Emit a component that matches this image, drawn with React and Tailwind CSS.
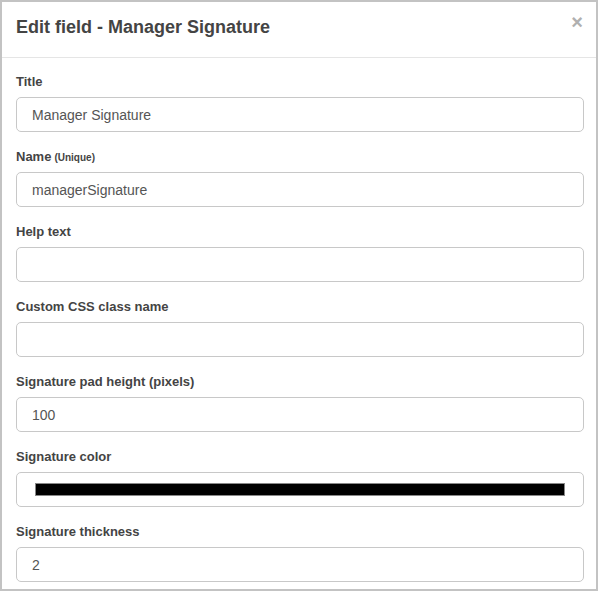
import React from 'react';

const fields = [
    { label: 'Title', value: 'Manager Signature' },
    { label: 'Name', note: '(Unique)', value: 'managerSignature' },
    { label: 'Help text', value: '' },
    { label: 'Custom CSS class name', value: '' },
    { label: 'Signature pad height (pixels)', value: '100' },
    { label: 'Signature color', color: true },
    { label: 'Signature thickness', value: '2' },
];

const Field = ({ label, note, value, color }) => (
    <div className="mb-[16px]">
        <label className="block h-[18px] leading-[18px] mb-[6px] text-[13px] font-bold text-[#444]">
            {label}
            {note && <span className="text-[10px] ml-[3px]">{note}</span>}
        </label>
        {color ? (
            <div className="h-[35px] border border-[#c8c8c8] rounded-[5px] bg-white flex items-center pl-[18px] pr-[18px]">
                <div className="w-full h-[13px] bg-black border border-[#888]" />
            </div>
        ) : (
            <input
                className="block w-full h-[35px] border border-[#c8c8c8] rounded-[5px] bg-white pl-[15px] text-[14px] text-[#555] outline-none"
                type="text"
                defaultValue={value}
                readOnly />
        )}
    </div>
);

const App = () => {
    return (
        <div className="w-[598px] h-[591px] overflow-hidden bg-white border-2 border-[#c3c3c3] font-['Liberation_Sans',Arial,sans-serif]">
            <div className="h-[56px] border-b border-[#e5e5e5] flex items-center justify-between pl-[14px] pr-[13px] pb-[6px]">
                <h4 className="text-[18px] font-bold text-[#444] leading-none">Edit field - Manager Signature</h4>
                <span className="text-[20px] font-bold text-[#b0b0b0] leading-none -mt-[9px]">×</span>
            </div>
            <div className="pt-[15px] pl-[14px] pr-[12px]">
                {fields.map((f) => (
                    <Field key={f.label} {...f} />
                ))}
            </div>
        </div>
    );
};

export default App;
